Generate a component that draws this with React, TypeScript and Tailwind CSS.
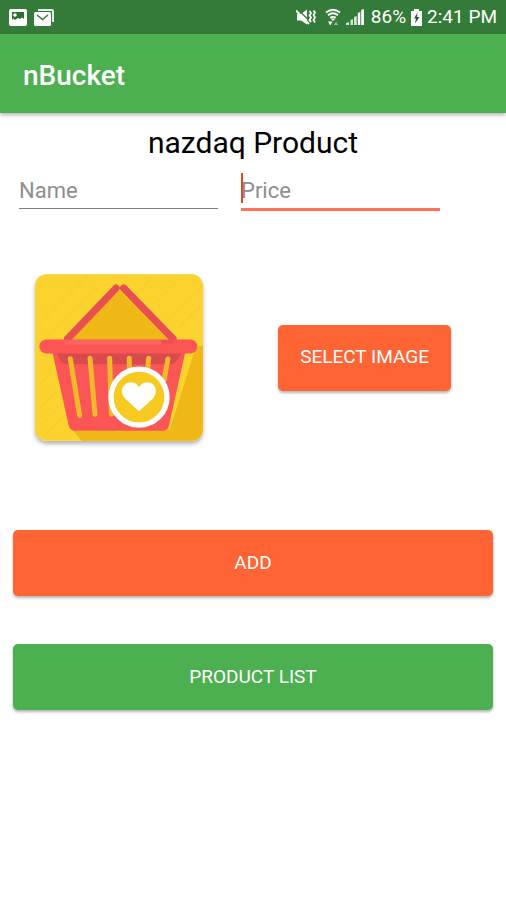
import { useState } from 'react'

const FONT = "font-['Roboto','Liberation_Sans',sans-serif]"

function PictureIcon() {
  return (
    <svg viewBox="0 0 18 17" className="h-[17px] w-[18px]" aria-hidden="true">
      <rect width="18" height="17" rx="2" fill="#fff" />
      <path d="M3 3h12v7l-2-1.500-2 1.500-2-1-3 2-1.500-1.500L3 11z" fill="#2e6f32" />
      <circle cx="6" cy="6" r="1.800" fill="#fff" />
    </svg>
  )
}

function MailIcon() {
  return (
    <svg viewBox="0 0 20 17" className="h-[17px] w-5" aria-hidden="true">
      <path d="M4 1h14q1 0 1 1v11" fill="none" stroke="#e3eee3" strokeWidth="2" />
      <rect y="3" width="17" height="14" rx="1.5" fill="#fff" />
      <path d="M3 6l5.500 4.500L14 6" fill="none" stroke="#347a38" strokeWidth="1.500" />
    </svg>
  )
}

function VibrateMuteIcon() {
  return (
    <svg viewBox="0 0 20 18" className="h-[18px] w-5" aria-hidden="true">
      <path d="M1 6h4l6-4.500v15L5 12.500H1z" fill="#fff" />
      <path d="M2 1.500l12 12" stroke="#347a38" strokeWidth="1.200" />
      <path d="M0 2.500l13 13.500" stroke="#fff" strokeWidth="2" />
      <path
        d="M13.500 3l1.500 2-1.500 2.500 1.500 2-1.500 2.500 1.500 2M17.500 2.500L19 4.500 17.500 7 19 9.500 17.500 12l1.500 2.500"
        fill="none"
        stroke="#fff"
        strokeWidth="1.800"
      />
    </svg>
  )
}

function WifiIcon() {
  return (
    <svg viewBox="0 0 16 18" className="h-[18px] w-4" aria-hidden="true">
      <path
        d="M1 4.500q7-5.500 14 0M3 7.300q5-4 10 0M5.200 9.800q2.800-2 5.600 0"
        fill="none"
        stroke="#fff"
        strokeWidth="1.800"
      />
      <path d="M5.500 10.500h5L8 13z" fill="#fff" />
      <path d="M3 13.500h4.500l-2.200 4z" fill="#fff" />
      <path d="M9 17h4l-2-3.500z" fill="#9fc2a1" />
    </svg>
  )
}

function SignalIcon() {
  return (
    <svg viewBox="0 0 18 18" className="h-[18px] w-[18px]" aria-hidden="true">
      <path d="M0 17v-2l3-1v3zM4.500 17v-5L7 11v6zM8 17V9l2.800-1v9z" fill="#d3e3d4" />
      <path d="M11.800 17V5l2.500-1v13zM15.200 17V2L18 1v16z" fill="#fff" />
    </svg>
  )
}

function BatteryIcon() {
  return (
    <svg viewBox="0 0 11 17" className="h-[17px] w-[11px]" aria-hidden="true">
      <path d="M3 0h5v2h3v15H0V2h3z" fill="#fff" />
      <path d="M6.500 3.500L3 9.500h2l-1 5 4.500-6.500H6z" fill="#245a28" />
    </svg>
  )
}

function StatusBar() {
  return (
    <div className="flex h-[34px] items-center justify-between bg-[#347a38] px-[9px] text-white">
      <div className="flex items-center gap-[7px]">
        <PictureIcon />
        <MailIcon />
      </div>
      <div className="flex items-center gap-[5px] text-[19px] leading-6">
        <div className="flex items-center gap-[5px] pr-0.5">
          <VibrateMuteIcon />
          <span className="pl-1">
            <WifiIcon />
          </span>
          <SignalIcon />
        </div>
        <span>86%</span>
        <BatteryIcon />
        <span>2:41 PM</span>
      </div>
    </div>
  )
}

function BasketPicture() {
  return (
    <svg
      viewBox="45 42 504 500"
      role="img"
      aria-label="Product image"
      className="h-[167px] w-[168px] rounded-xl shadow-[0_3px_4px_rgba(0,0,0,0.3)]"
    >
      <rect x="45" y="42" width="504" height="500" fill="#fcd22f" />
      <path
        d="M50 200L205 45M60 255L240 75M50 380L95 335M50 455L115 390M60 500L130 430M70 530L140 460M330 120L400 50M385 150L490 45M430 190L548 72M470 210L548 132"
        stroke="#f3ca2c"
        strokeWidth="3"
      />
      <path d="M299 90L145 245H450z" fill="#efb816" />
      <path d="M528 258H549V542H185L150 500 450 508z" fill="#efb816" />
      <path d="M288 84L143 236M311 84L459 236" stroke="#e84f50" strokeWidth="22" strokeLinecap="round" />
      <path d="M97 275H496L447 496Q444 512 428 512H166Q150 512 146 496z" fill="#fc5556" />
      <path d="M108 278H486L470 302Q464 312 452 312H146Q130 312 122 302z" fill="#d94a4c" />
      <path
        d="M151 296L179 466M210 294L225 462M269 294L274 462M328 294V340M386 294L382 340M444 296L432 360"
        stroke="#f0b92a"
        strokeWidth="15"
        strokeLinecap="round"
      />
      <rect x="58" y="238" width="474" height="42" rx="21" fill="#fc5556" />
      <path d="M132 240H424Q430 254 414 254H148Q132 254 132 240z" fill="#fb6463" />
      <path d="M424 240H464L454 252H424z" fill="#ee5051" />
      <circle cx="357" cy="411" r="84" fill="#f6ca20" stroke="#fff" strokeWidth="16" />
      <path
        d="M357 453L315 415Q298 396 310 378C325 359 349 365 357 381C365 365 391 359 404 378Q414 396 399 415z"
        fill="#fff"
      />
    </svg>
  )
}

const BUTTON =
  'h-[66px] rounded-[5px] text-[19px] uppercase text-white shadow-[0_2px_3px_rgba(0,0,0,0.3)]'

const FIELD = 'text-[22px] text-black outline-none placeholder:text-[#8e8e8e]'

export default function App() {
  const [name, setName] = useState('')
  const [price, setPrice] = useState('')

  return (
    <div className={`min-h-screen bg-white ${FONT}`}>
      <StatusBar />
      <header className="flex h-[79px] items-center bg-[#4caf50] px-[23px] pt-1 shadow-[0_2px_4px_rgba(0,0,0,0.3)]">
        <h1 className="text-[28px] font-medium text-white">nBucket</h1>
      </header>

      <main>
        <h2 className="pt-3 text-center text-[30px] leading-9 text-black">nazdaq Product</h2>

        <form onSubmit={(e) => e.preventDefault()}>
          <div className="flex items-start gap-[23px] pl-[19px] pr-[66px] pt-3">
            <input
              type="text"
              aria-label="Name"
              placeholder="Name"
              value={name}
              onChange={(e) => setName(e.target.value)}
              className={`${FIELD} h-9 min-w-0 flex-1 border-b border-[#808080]`}
            />
            <div className="relative min-w-0 flex-1">
              <input
                type="text"
                inputMode="decimal"
                aria-label="Price"
                placeholder="Price"
                value={price}
                onChange={(e) => setPrice(e.target.value)}
                className={`${FIELD} h-[38px] w-full border-b-[3px] border-[#fb7358] caret-[#dd4a25]`}
              />
              {!price && (
                <span className="pointer-events-none absolute left-0 top-0 h-[30px] w-0.5 bg-[#dd4a25]" />
              )}
            </div>
          </div>

          <div className="flex items-center pl-[35px] pr-[55px] pt-[63px]">
            <BasketPicture />
            <div className="flex flex-1 justify-end">
              <button type="button" className={`${BUTTON} bg-[#ff6434] px-[22px]`}>
                Select Image
              </button>
            </div>
          </div>

          <div className="flex flex-col gap-12 px-[13px] pt-[89px]">
            <button type="submit" className={`${BUTTON} bg-[#ff6434]`}>
              Add
            </button>
            <button type="button" className={`${BUTTON} bg-[#4caf50]`}>
              Product List
            </button>
          </div>
        </form>
      </main>
    </div>
  )
}
